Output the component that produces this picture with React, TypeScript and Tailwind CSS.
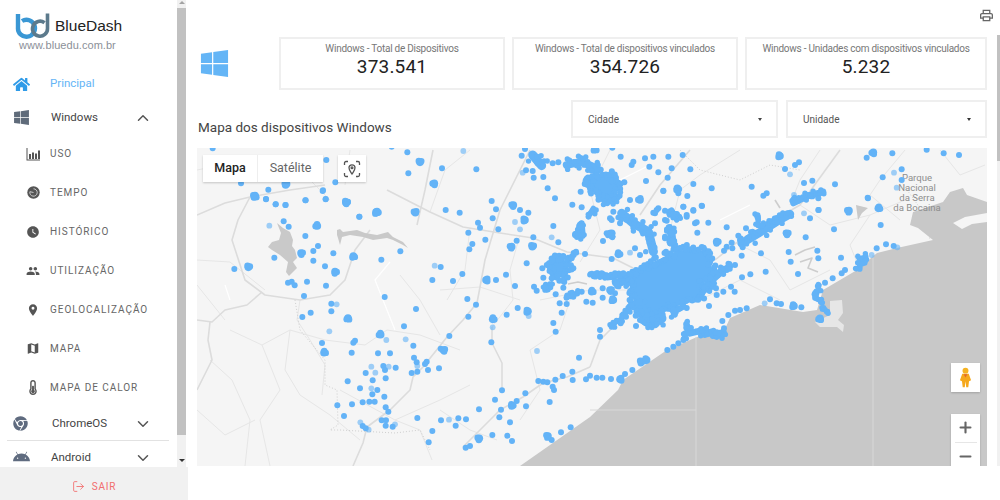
import { ChevronDown, ChevronUp, LogOut, Plus, Minus } from "lucide-react";
import { FaAndroid, FaChrome, FaHome, FaThermometerHalf, FaWindows } from "react-icons/fa";
import { MdLocationOn, MdMap, MdPeople, MdWatchLater } from "react-icons/md";

type IconProps = { size?: number; className?: string };

function UsoIcon({ className }: IconProps) {
  return (
    <svg width="14" height="14" viewBox="0 0 14 14" fill="currentColor" className={className}>
      <path d="M0.5 1 H1.5 V12.500 H14 V13.500 H0.5 Z" />
      <rect x="3" y="7" width="2" height="5" />
      <rect x="6" y="5.500" width="2" height="6.500" />
      <rect x="9" y="6.500" width="2" height="5.500" />
      <rect x="12" y="3.500" width="2" height="8.500" />
    </svg>
  );
}

function TempoIcon({ className }: IconProps) {
  return (
    <svg width="13" height="13" viewBox="0 0 13 13" className={className}>
      <circle cx="6.500" cy="6.500" r="6.200" fill="currentColor" />
      <path d="M6.500 2.800 A3.700 3.700 0 1 1 2.900 5.700 L6.500 6.500" fill="none" stroke="#d5d5d5" strokeWidth="0.9" />
    </svg>
  );
}

const subItems = [
  { name: "USO", icon: UsoIcon, size: 14 },
  { name: "TEMPO", icon: TempoIcon, size: 14 },
  { name: "HISTÓRICO", icon: MdWatchLater, size: 16 },
  { name: "UTILIZAÇÃO", icon: MdPeople, size: 16 },
  { name: "GEOLOCALIZAÇÃO", icon: MdLocationOn, size: 16 },
  { name: "MAPA", icon: MdMap, size: 17 },
  { name: "MAPA DE CALOR", icon: FaThermometerHalf, size: 15 },
];

const stats = [
  { label: "Windows - Total de Dispositivos", value: "373.541", width: "w-[226px]" },
  { label: "Windows - Total de dispositivos vinculados", value: "354.726", width: "w-[226px]" },
  { label: "Windows - Unidades com dispositivos vinculados", value: "5.232", width: "w-[242px]" },
];

// marker data, each group in 3x coordinates from its own origin
const dotGroups = [
  {
    ox: 190,
    oy: 190,
    dots: "228,28 257,43 287,45 347,31 407,28 398,3 508,80 767,60 809,68 905,33 970,45 918,58 990,60 1015,68 908,85 1005,92 864,98 870,113 925,118 835,128 1090,108 1147,44 1095,25 1172,5 1175,52 1030,142 1105,157 886,149 847,162 838,178 980,152 1158,185 281,94 296,110 346,138 384,168 370,183 430,190 574,209 631,184 253,203 370,212 405,229 133,237 752,231 817,252 948,254 1010,220 1057,235 1145,205 1185,192 1150,235 727,270 789,273 918,270 975,288 1032,290 1060,263 1085,265 1120,293 1040,302 1175,305 1150,320 1130,322 1097,313 294,278 305,275 314,286 351,275 408,287 342,318 584,321 832,327 858,344 424,341 424,364 678,357 362,368 337,381 835,380 950,374 983,354 1115,368 1109,340 1130,342 1189,335 1090,399 1097,425 642,409 778,438 495,452 490,458 396,459 904,457 670,467 752,476 485,488 564,490 600,490 672,503 680,517 710,515 705,522 1167,503 580,528 617,533 585,540 527,549 665,549 682,545 714,540 747,535 548,571 587,565 473,574 510,595 562,600 547,613 583,620 1045,573 1060,575 1072,577 1096,569 1118,558 1147,545 1148,570 1188,568 1088,590 1092,600 936,601 1006,610 915,629 980,633 1008,649 1079,636 518,637 538,635 554,635 486,643 442,646 587,652 595,665 867,658 933,659 462,678 682,684 928,682 828,688 805,685 753,691 575,691 588,691 518,708 527,715 587,707 608,710 797,707 960,697 727,723 1113,727 1142,712 1085,750 907,735 952,737 966,753 840,768 827,773 716,757",
    big: "195,18 468,38 558,66 676,68 382,108 1172,105 1160,135 965,170 1027,170 333,189 490,198 175,232 435,245 888,270 1070,295 474,384 908,388 1014,364 572,434 760,480 402,488 965,648 1074,738 868,745",
    light: "238,107 975,96 990,118 1085,142 734,227 440,343 1016,378 908,412 418,424 589,450 647,448 1041,483 544,530 596,530 556,548 682,528 544,595 777,689 511,697 536,719 615,703",
  },
  {
    ox: 197,
    oy: 145,
    dots: "47,10 388,45 132,115 214,134 207,162 236,178 265,180 325,166 378,136 386,162 415,112 487,215 584,5",
    big: "174,152 266,120 447,172 540,200",
    light: "",
  },
  {
    ox: 400,
    oy: 145,
    dots: "22,22 25,85 126,70 229,73 365,32 375,12 378,76 398,78 401,98 430,96 458,55 475,52 443,130 637,8 662,35 700,50 735,40 760,35 805,35 848,30 695,60 748,65 815,70 775,82 871,73 803,98 738,108 673,112 880,117 790,137 640,200 630,220 815,200 795,225 770,195 820,260 795,280 850,185 880,195 860,215 885,235 765,205 690,165 720,165",
    big: "60,52 103,115 832,130 585,12 825,210 815,290 720,165 340,180 375,225",
    light: "190,18 368,83",
  },
  {
    ox: 590,
    oy: 190,
    dots: "150,30 220,3 265,10 292,18 335,47 280,50 205,55 225,62 190,68 310,62 290,75 320,97 355,98 322,128 230,92 195,100 245,130 225,140 250,155 228,185 410,112 468,115 445,137 425,158 410,170 402,182 427,175 458,172 455,197 513,190 596,186 602,215 682,182 753,203 624,252 481,253 527,245 456,262 435,225 418,222 685,205 660,85 686,60 777,63 865,55 872,105 732,118 647,142 587,128 834,25 415,375 435,362 450,360 470,355 540,328 560,340 573,342 634,352 397,393 402,415 232,480 250,470 265,460 280,450 127,540 105,552 63,567 37,563 20,563 0,557 357,348 380,315 400,305 434,305 423,290 378,295 360,265 65,207 150,195 135,175 39,153 50,130 65,90 90,100 20,250 35,250 50,260 75,250 100,250 80,280 60,300 75,310 38,295 38,323 8,338 68,332 125,345 108,380 92,400 137,377 138,408 65,410 30,420 30,440 175,405 200,402 150,390 755,250 765,240 728,265 705,278 888,163 911,168 860,175",
    big: "255,75 380,155 85,193 65,130 255,365 612,348 155,515 170,510 90,568 5,305 690,385 590,130 60,300 70,330",
    light: "120,188 642,70 524,340 845,195 922,172 185,405",
  },
  {
    ox: 700,
    oy: 145,
    dots: "297,52 285,60 255,72 312,114 337,107 155,125 35,130 200,145 190,152 6,183 548,97 605,73 605,105 577,25 680,14 731,25 777,30 500,38 405,118 355,160 503,158 355,195",
    big: "240,33 520,22 447,197 535,190",
    light: "270,88 582,83 590,128 282,150",
  },
];

const blobs = [
  { ox: 400, oy: 145, w: 13, pts: "500,60 545,50 590,70" },
  { ox: 400, oy: 145, w: 6, pts: "610,175 650,170" },
  { ox: 400, oy: 145, w: 15, pts: "398,30 425,62" },
  { ox: 400, oy: 145, w: 5, pts: "505,345 525,320" },
  { ox: 400, oy: 145, w: 10, pts: "545,235 548,270 525,270" },
  { ox: 400, oy: 145, w: 9, pts: "565,215 580,190" },
  { ox: 400, oy: 145, w: 7, pts: "435,432 455,415" },
  { ox: 400, oy: 145, w: 6, pts: "500,460 535,440" },
  { ox: 400, oy: 145, w: 6, pts: "585,385 630,395" },
  { ox: 400, oy: 145, w: 8, pts: "815,250 820,300" },
  { ox: 400, oy: 145, w: 8, pts: "630,265 640,275" },
  { ox: 590, oy: 190, w: 15, pts: "95,70 130,100 175,125 190,185" },
  { ox: 590, oy: 190, w: 9, pts: "240,110 250,165" },
  { ox: 590, oy: 190, w: 9, pts: "245,60 260,90" },
  { ox: 590, oy: 190, w: 14, pts: "455,160 505,130 560,95 600,72" },
  { ox: 590, oy: 190, w: 6, pts: "495,72 510,110" },
  { ox: 590, oy: 190, w: 10, pts: "610,40 660,15 700,5" },
  { ox: 590, oy: 190, w: 6, pts: "690,285 680,320 695,340" },
  { ox: 590, oy: 190, w: 6, pts: "695,360 715,362" },
  { ox: 590, oy: 190, w: 7, pts: "805,205 828,200 800,238" },
  { ox: 590, oy: 190, w: 7, pts: "290,395 300,420 280,445" },
  { ox: 590, oy: 190, w: 11, pts: "300,430 340,420 380,440 400,425" },
  { ox: 590, oy: 190, w: 11, pts: "350,285 395,245 420,228" },
  { ox: 590, oy: 190, w: 7, pts: "0,250 120,262" },
  { ox: 590, oy: 190, w: 11, pts: "75,275 125,275" },
  { ox: 590, oy: 190, w: 6, pts: "135,340 100,380 65,410" },
  { ox: 590, oy: 190, w: 16, pts: "150,340 170,395 215,385" },
  { ox: 590, oy: 190, w: 9, pts: "240,350 255,375" },
  { ox: 590, oy: 190, w: 7, pts: "335,310 375,280" },
];

// solid clusters: the metro area and the two big towns north and west of it
const masses = [
  {
    ox: 400,
    oy: 145,
    pts: "560,110 590,85 640,90 655,130 650,150 620,165 590,150 565,130",
  },
  {
    ox: 400,
    oy: 145,
    pts: "450,345 490,335 505,370 495,400 470,395 450,370",
  },
  {
    ox: 590,
    oy: 190,
    pts: "130,250 190,215 260,185 310,172 360,190 368,250 330,290 340,320 280,345 235,350 205,375 150,365 125,320 120,285",
  },
];

const seaShape =
  "520,466 590,417 618,390 623,380 667,350 697,337 723,333 730,318 760,305 803,312 817,310 823,290 857,270 877,253 897,248 933,240 918,228 910,225 913,212 943,202 950,192 963,188 967,195 987,202 987,466";

const lakes = [
  "277,223 283,228 290,232 293,240 292,246 295,250 297,258 293,262 297,268 289,276 286,272 288,262 280,255 272,250 268,247 272,242 279,240 281,233",
  "337,230 340,229 343,232 357,230 365,233 377,235 388,232 393,237 403,242 408,248 403,245 393,240 387,238 373,240 363,237 350,235 342,237 340,245 338,238 337,235",
  "856,205 868,208 862,213 858,220",
];

const lakeLines = [
  "795,255 805,250 815,247",
  "800,262 812,258 808,268 818,272",
  "568,284 578,282 587,284",
  "775,200 780,208",
];

const mainRoads = [
  "197,215 225,203 250,197 290,190 325,185",
  "250,197 238,220 232,240 245,280 265,295 300,300 330,295 345,280 355,250 370,230",
  "197,320 212,322 225,310 247,305 262,292",
  "210,322 208,340 212,360 197,390",
  "387,190 430,212 463,227 500,233 533,238 567,252 613,258 633,268",
  "480,287 477,303 463,320 447,337 423,367 413,377 410,390 390,410 367,427 363,443 353,466",
  "463,447 480,430 500,410 523,397 543,383 567,377 590,367",
  "492,327 492,343 502,363 502,390",
  "433,150 425,190 417,225",
  "530,150 500,210 485,260 480,287",
  "640,300 600,340 590,367",
  "690,150 660,185 640,215",
  "800,205 840,150",
  "800,205 740,240 715,260",
];

const thinRoads = [
  "197,260 230,262 265,290",
  "197,285 225,320",
  "230,330 262,345 290,330 325,340 365,345 387,330 420,335 460,350",
  "262,345 280,390 260,420 270,466",
  "290,330 285,370 300,395 330,415 360,440",
  "210,360 232,380 250,420 245,466",
  "197,410 225,435 255,420",
  "300,300 297,320 310,340 325,365 322,395",
  "400,275 420,300 440,335",
  "430,212 445,170 470,150",
  "470,228 465,270 447,300",
  "520,235 510,270 513,300 492,327",
  "570,300 560,330 530,350 540,390 520,420",
  "610,150 590,190 600,230 580,262",
  "740,150 700,175 680,190 670,230",
  "730,240 770,260 790,290 830,270",
  "800,205 830,225 870,215 905,200",
  "870,215 850,245 860,270",
  "820,150 800,180 790,205",
  "905,150 880,180 870,195 900,220",
  "940,150 960,175 985,165",
  "700,300 740,280 780,300",
  "340,390 395,420 440,400 470,385",
  "440,410 470,430 497,440",
  "395,420 420,430 432,460",
  "540,300 590,290 630,290",
  "197,170 250,160 300,170 330,200",
  "350,150 345,185",
  "440,290 480,287 520,300",
];

const borderRoads = [
  "295,300 300,330 325,360 325,385 337,390 338,425 330,430 340,430 395,433 420,430 430,450",
  "680,150 700,170 740,180 770,165 800,170",
  "900,180 925,215 930,240",
];

const whiteRoads = ["390,262 375,280 385,305 395,330", "225,285 230,300", "590,195 640,170 650,165", "720,220 750,205"];

function toPoints(ox: number, oy: number, list: string) {
  if (!list) return [];
  return list.split(" ").map((p) => {
    const [x, y] = p.split(",").map(Number);
    return [ox + x / 3, oy + y / 3];
  });
}

// fixed pseudo random, so every run draws the same markers
function jitter(n: number) {
  const v = Math.sin(n * 12.9898) * 43758.5453;
  return v - Math.floor(v) - 0.5;
}

function scatter(pts: number[][], w: number) {
  const out: number[][] = [];
  let n = pts[0][0] + pts[0][1];
  for (let i = 0; i < pts.length - 1; i++) {
    const [x1, y1] = pts[i];
    const [x2, y2] = pts[i + 1];
    const len = Math.hypot(x2 - x1, y2 - y1) || 1;
    const steps = Math.ceil(len / 2);
    for (let s = 0; s <= steps; s++) {
      const t = s / steps;
      n += 1;
      const off = jitter(n) * w;
      out.push([x1 + (x2 - x1) * t - ((y2 - y1) / len) * off, y1 + (y2 - y1) * t + ((x2 - x1) / len) * off]);
    }
  }
  return out;
}

function MapDrawing() {
  return (
    <svg viewBox="197 148 790 318" className="block h-full w-full">
      <rect x="197" y="148" width="790" height="318" fill="#f5f5f5" />
      <g fill="none" strokeLinejoin="round">
        {thinRoads.map((p) => (
          <polyline key={p} points={p} stroke="#e6e6e6" strokeWidth="1" />
        ))}
        {borderRoads.map((p) => (
          <polyline key={p} points={p} stroke="#cfcfcf" strokeWidth="1" strokeDasharray="1 2" />
        ))}
        {mainRoads.map((p) => (
          <polyline key={p} points={p} stroke="#dcdcdc" strokeWidth="1.6" />
        ))}
        {whiteRoads.map((p) => (
          <polyline key={p} points={p} stroke="#ffffff" strokeWidth="1.2" />
        ))}
        {lakeLines.map((p) => (
          <polyline key={p} points={p} stroke="#cdcdcd" strokeWidth="1.6" />
        ))}
      </g>
      {lakes.map((p) => (
        <polygon key={p} points={p} fill="#c9c9c9" />
      ))}
      <polygon points={seaShape} fill="#c8c8c8" />
      <polygon points="953,223 965,217 987,213 987,222 972,224 962,229" fill="#f5f5f5" />
      <polygon
        points="830,301 842,300 843,313 838,320 844,325 843,332 837,327 820,327 815,322 830,315"
        fill="#e6e6e6"
      />
      <polyline points="696,337 696,466" fill="none" stroke="#d8d8d8" />
      <polyline points="873,255 873,466" fill="none" stroke="#d8d8d8" />
      <polyline points="590,410 696,410" fill="none" stroke="#d8d8d8" />
      <text fill="#8e8e8e" fontSize="9.6" fontFamily="Roboto, sans-serif" textAnchor="middle">
        <tspan x="917" y="181">Parque</tspan>
        <tspan x="917" y="191">Nacional</tspan>
        <tspan x="917" y="201">da Serra</tspan>
        <tspan x="917" y="211">da Bocaina</tspan>
      </text>
      <g fill="#63b3f7">
        {masses.map((m) => {
          const pts = toPoints(m.ox, m.oy, m.pts);
          return (
            <g key={m.pts}>
              <polygon points={pts.join(" ")} />
              {scatter([...pts, pts[0]], 8).map(([x, y], i) => (
                <circle key={i} cx={x} cy={y} r="3" />
              ))}
            </g>
          );
        })}
        {blobs.map((b) => {
          const pts = toPoints(b.ox, b.oy, b.pts);
          return (
            <g key={b.pts}>
              <polyline
                points={pts.join(" ")}
                fill="none"
                stroke="#63b3f7"
                strokeWidth={b.w * 0.6}
                strokeLinecap="round"
                strokeLinejoin="round"
              />
              {scatter(pts, b.w).map(([x, y], i) => (
                <circle key={i} cx={x} cy={y} r="2.7" />
              ))}
            </g>
          );
        })}
        {dotGroups.map((g) => (
          <g key={`${g.ox}-${g.oy}`}>
            {toPoints(g.ox, g.oy, g.dots).map(([x, y], i) => (
              <circle key={i} cx={x} cy={y} r="3" />
            ))}
            {toPoints(g.ox, g.oy, g.big).map(([x, y], i) => {
              const a = jitter(i + g.ox) * 6.28;
              return (
                <g key={i}>
                  <circle cx={x} cy={y} r="3.8" />
                  <circle cx={x + Math.cos(a) * 1.8} cy={y + Math.sin(a) * 1.8} r="3.2" />
                  <circle cx={x - Math.sin(a) * 1.8} cy={y + Math.cos(a) * 1.8} r="3.2" />
                </g>
              );
            })}
            {toPoints(g.ox, g.oy, g.light).map(([x, y], i) => (
              <circle key={i} cx={x} cy={y} r="2.9" opacity="0.6" />
            ))}
          </g>
        ))}
      </g>
    </svg>
  );
}

function Logo() {
  return (
    <svg width="35" height="26" viewBox="0 0 35 26" className="shrink-0">
      <path d="M3 1 V14.500 a8.500 8.500 0 1 0 4 -6.500" fill="none" stroke="#3a97d4" strokeWidth="4.400" />
      <path d="M32.500 0.500 V15.500 a7.500 7.500 0 1 1 -3 -5.800" fill="none" stroke="#5c7a8c" strokeWidth="3.600" />
    </svg>
  );
}

function Pegman() {
  return (
    <svg width="13" height="21" viewBox="0 0 14 22">
      <circle cx="7" cy="3.600" r="3.200" fill="#f5b324" />
      <path d="M3.500 7 H10.500 L13 14 L10.800 15 L10 21.500 H7.800 L7 15 L6.200 21.500 H4 L3.200 15 L1 14 Z" fill="#f5a81c" />
      <path d="M5 7.500 L7 11 L9 7.500 Z" fill="#e2692b" />
    </svg>
  );
}

function Sidebar() {
  return (
    <aside className="flex h-full w-[188px] shrink-0 flex-col font-['Roboto',sans-serif]">
      <div className="flex min-h-0 flex-1 pr-[2px]">
        <div className="min-w-0 flex-1 overflow-hidden">
          <div className="flex h-[67px] flex-col pl-[15px] pt-[13px] font-['Liberation_Sans',sans-serif]">
            <div className="flex items-center gap-[5px]">
              <Logo />
              <span className="text-[15.5px] leading-none text-[#222]">BlueDash</span>
            </div>
            <span className="pl-[4px] text-[11px] leading-[13px] tracking-[0.05px] text-[#8b9098]">www.bluedu.com.br</span>
          </div>
          <div className="flex h-[34px] items-center pl-[13px]">
            <FaHome size={17} className="w-[17px] text-[#2f9be8]" />
            <span className="ml-[20px] text-[11.5px] text-[#64b5f6]">Principal</span>
          </div>
          <div className="flex h-[33px] items-center pl-[13px]">
            <FaWindows size={17} className="text-[#5f6b7a]" />
            <span className="ml-[21px] text-[11.5px] text-[#444]">Windows</span>
            <ChevronUp size={18} className="ml-auto mr-[25px] text-[#555]" />
          </div>
          {subItems.map((item) => (
            <div key={item.name} className="flex h-[39px] items-center pl-[26px]">
              <span className="flex w-[14px] justify-center">
                <item.icon size={item.size} className="text-[#555]" />
              </span>
              <span className="ml-[10px] text-[10px] tracking-[0.95px] text-[#666]">{item.name}</span>
            </div>
          ))}
          <div className="flex h-[33px] items-center pl-[13px]">
            <FaChrome size={15} className="text-[#5f6b7f]" />
            <span className="ml-[24px] text-[11.5px] text-[#444]">ChromeOS</span>
            <ChevronDown size={18} className="ml-auto mr-[25px] text-[#555]" />
          </div>
          <div className="ml-[7px] mr-[8px] h-px bg-[#e2e2e2]" />
          <div className="flex h-[33px] items-center pl-[13px]">
            <FaAndroid size={17} className="text-[#5f6b7f]" />
            <span className="ml-[21px] text-[11.5px] text-[#444]">Android</span>
            <ChevronDown size={18} className="ml-auto mr-[25px] text-[#555]" />
          </div>
        </div>
        <div className="flex w-[9px] shrink-0 flex-col items-center bg-[#f1f1f1]">
          <span className="mt-[1px] h-0 w-0 border-x-[3px] border-b-[3px] border-x-transparent border-b-[#a3a3a3]" />
          <div className="mt-[4px] h-[427px] w-full bg-[#c1c1c1]" />
          <span className="mt-[24px] h-0 w-0 border-x-[3px] border-t-[3px] border-x-transparent border-t-[#333]" />
        </div>
      </div>
      <div className="flex h-[33px] shrink-0 items-center justify-center gap-[7px] bg-[#f1f1f1] pt-[5px] text-[#f26d6d]">
        <LogOut size={13} strokeWidth={1.6} />
        <span className="text-[10px] tracking-[0.8px]">SAIR</span>
      </div>
    </aside>
  );
}

export default function App() {
  return (
    <div className="flex h-[500px] w-[1000px] overflow-hidden bg-white font-['Roboto',sans-serif]">
      <Sidebar />
      <main className="flex min-w-0 flex-1">
        <div className="flex min-w-0 flex-1 flex-col pl-[9px] pr-[10px]">
          <div className="flex h-[37px] items-start justify-end pt-[9px]">
            <svg width="13" height="13" viewBox="2 2 20 20" fill="#666" className="mr-[-6px]">
              <path d="M19 8h-1V3H6v5H5c-1.66 0-3 1.34-3 3v6h4v4h12v-4h4v-6c0-1.66-1.34-3-3-3zM8 5h8v3H8V5zm8 12v2H8v-4h8v2zm2-2v-2H6v2H4v-4c0-.55.45-1 1-1h14c.55 0 1 .45 1 1v4h-2z" />
            </svg>
          </div>
          <div className="flex h-[53px] items-center">
            <div className="w-[82px] shrink-0 pl-[2px]">
              <FaWindows size={31} className="text-[#64b5f6]" />
            </div>
            <div className="flex gap-[7px]">
              {stats.map((s) => (
                <div
                  key={s.label}
                  className={`${s.width} flex h-[53px] flex-col items-center border-2 border-[#efefef] pt-[3px]`}
                >
                  <span className="text-[10px] leading-[14px] tracking-[-0.25px] text-[#777]">{s.label}</span>
                  <span className="text-[19px] leading-[21px] tracking-[0.2px] text-[#222]">{s.value}</span>
                </div>
              ))}
            </div>
          </div>
          <div className="mt-[10px] flex h-[38px] items-end">
            <span className="pb-[2px] pl-[1px] text-[13.5px] leading-[18px] text-[#444]">
              Mapa dos dispositivos Windows
            </span>
            <div className="ml-auto flex gap-[8px]">
              <div className="flex h-[38px] w-[207px] items-center justify-between border-2 border-[#efefef] pl-[15px] pr-[14px] text-[10px] text-[#555]">
                Cidade
                <span className="h-0 w-0 border-x-[2.5px] border-t-[3px] border-x-transparent border-t-[#444]" />
              </div>
              <div className="flex h-[38px] w-[201px] items-center justify-between border-2 border-[#efefef] pl-[15px] pr-[14px] text-[10px] text-[#555]">
                Unidade
                <span className="h-0 w-0 border-x-[2.5px] border-t-[3px] border-x-transparent border-t-[#333]" />
              </div>
            </div>
          </div>
          <div className="relative mt-[10px] h-[318px] overflow-hidden">
            <MapDrawing />
            <div className="absolute left-[6px] top-[7px] flex h-[27px] bg-white text-[12.5px] shadow-[0_1px_2px_rgba(0,0,0,0.2)]">
              <span className="flex w-[55px] items-center justify-center border-r border-[#eee] font-medium text-[#222]">
                Mapa
              </span>
              <span className="flex w-[65px] items-center justify-center text-[#666]">Satélite</span>
            </div>
            <div className="absolute left-[141px] top-[7px] flex h-[27px] w-[28px] items-center justify-center bg-white shadow-[0_1px_2px_rgba(0,0,0,0.2)]">
              <svg width="18" height="18" viewBox="0 0 18 18" fill="none" stroke="#555" strokeWidth="1.300">
                <path d="M1.500 5 V3 a1.500 1.500 0 0 1 1.500 -1.500 H5 M13 1.500 H15 a1.500 1.500 0 0 1 1.500 1.500 V5 M16.500 13 V15 a1.500 1.500 0 0 1 -1.500 1.500 H13 M5 16.500 H3 a1.500 1.500 0 0 1 -1.500 -1.500 V13" />
                <path d="M9 14 C7.500 11.500 6 10 6 7.800 a3 3 0 0 1 6 0 C12 10 10.500 11.500 9 14 Z" />
                <circle cx="9" cy="7.800" r="0.900" />
              </svg>
            </div>
            <div className="absolute right-[7px] top-[215px] flex h-[29px] w-[29px] items-center justify-center bg-white shadow-[0_1px_2px_rgba(0,0,0,0.2)]">
              <Pegman />
            </div>
            <div className="absolute right-[7px] top-[266px] flex h-[56px] w-[29px] flex-col items-center bg-white shadow-[0_1px_2px_rgba(0,0,0,0.2)]">
              <span className="flex h-[28px] items-center">
                <Plus size={17} strokeWidth={3} className="text-[#666]" />
              </span>
              <span className="h-px w-[22px] bg-[#e6e6e6]" />
              <span className="flex h-[28px] items-center">
                <Minus size={17} strokeWidth={3} className="text-[#666]" />
              </span>
            </div>
          </div>
        </div>
        <div className="w-[3px] shrink-0 pt-[35px]">
          <div className="h-[431px] bg-[#f1f1f1]">
            <div className="h-[126px] bg-[#c1c1c1]" />
          </div>
        </div>
      </main>
    </div>
  );
}
